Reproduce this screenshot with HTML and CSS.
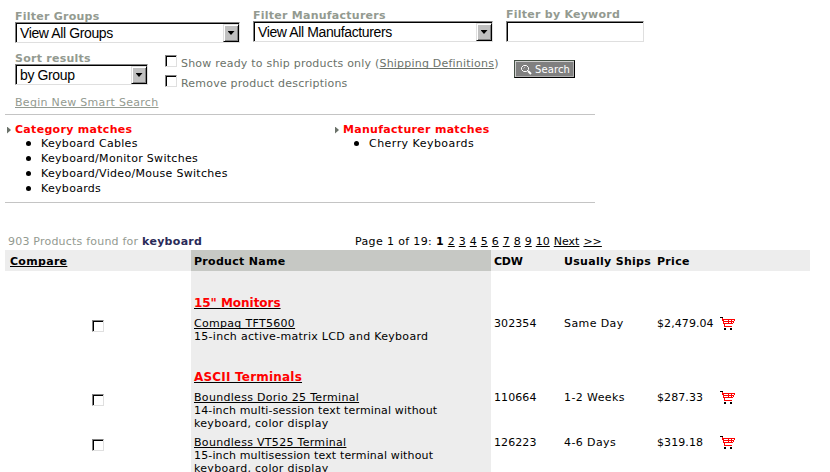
FILE: index.html
```
<!DOCTYPE html>
<html lang="en">
<head>
<meta charset="utf-8">
<title>Smart Search</title>
<link rel="stylesheet" href="styles.css">
</head>
<body>
<svg class="defs" width="0" height="0">
  <symbol id="cart" viewBox="0 0 15 13" shape-rendering="crispEdges">
    <path fill="#000" d="M0 0h3v1H0zM4 11h2v2H4zM10 11h2v2h-2z"/>
    <path fill="#f00" d="M2 1h1v1h12v1H4v1h10v1H4v1h9v1H5v2h7v1H4V7H3V4H2zM8 2h1v5H8zM11 2h1v5h-1zM14 3h1v1h-1zM13 5h1v1h-1z"/>
  </symbol>
</svg>
<div class="page">
  <form class="filters">
    <div class="row top">
      <div class="field groups"><label class="lbl">Filter Groups</label>
        <div class="select"><span>View All Groups</span><i class="drop"></i></div></div>
      <div class="field makers"><label class="lbl">Filter Manufacturers</label>
        <div class="select"><span>View All Manufacturers</span><i class="drop"></i></div></div>
      <div class="field keyword"><label class="lbl">Filter by Keyword</label>
        <div class="select"></div></div>
    </div>
    <div class="row second">
      <div class="field sort"><label class="lbl">Sort results</label>
        <div class="select"><span>by Group</span><i class="drop"></i></div></div>
      <div class="options">
        <div class="option"><i class="check"></i><span>Show ready to ship products only (<a>Shipping Definitions</a>)</span></div>
        <div class="option"><i class="check"></i><span>Remove product descriptions</span></div>
      </div>
      <div class="search">
        <svg width="11" height="10" viewBox="0 0 11 10"><g fill="none" stroke="#fff"><path d="M2.5.5h3l2 2v2l-2 2h-3l-2-2v-2z"/><path stroke-width="2" d="M7 6l3 3"/><path stroke="#ddd" stroke-width=".7" d="M2.500 3.500l1.500-1.500"/></g></svg>
        <span>Search</span></div>
    </div>
    <a class="begin">Begin New Smart Search</a>
  </form>
  <div class="matches">
    <section class="category">
      <h2><i class="arrow"></i><span>Category matches</span></h2>
      <ul><li>Keyboard Cables</li><li>Keyboard/Monitor Switches</li><li>Keyboard/Video/Mouse Switches</li><li>Keyboards</li></ul>
    </section>
    <section class="maker">
      <h2><i class="arrow"></i><span>Manufacturer matches</span></h2>
      <ul><li>Cherry Keyboards</li></ul>
    </section>
  </div>
  <div class="summary">
    <div class="found"><span>903 Products found for</span> <b>keyboard</b></div>
    <div class="pager"><span>Page 1 of 19:</span><b>1</b><a>2</a><a>3</a><a>4</a><a>5</a><a>6</a><a>7</a><a>8</a><a>9</a><a>10</a><a>Next</a><a>&gt;&gt;</a></div>
  </div>
  <div class="grid head">
    <div class="compare"><a>Compare</a></div><div class="name">Product Name</div><div class="cdw">CDW</div><div>Usually Ships</div><div>Price</div><div></div>
  </div>
  <div class="grid group first"><div></div><div class="name"><a>15" Monitors</a></div></div>
  <div class="grid item single">
    <div class="pick"><i class="check"></i></div>
    <div class="name"><a>Compaq TFT5600</a><p>15-inch active-matrix LCD and Keyboard</p></div>
    <div class="num">302354</div><div class="ships">Same Day</div><div class="num">$2,479.04</div><div class="buy"><svg width="15" height="13"><use href="#cart"/></svg></div>
  </div>
  <div class="grid group"><div></div><div class="name"><a>ASCII Terminals</a></div></div>
  <div class="grid item">
    <div class="pick"><i class="check"></i></div>
    <div class="name"><a>Boundless Dorio 25 Terminal</a><p><span class="tight">14-inch multi-session text terminal without</span><br>keyboard, color display</p></div>
    <div class="num">110664</div><div class="ships">1-2 Weeks</div><div class="num">$287.33</div><div class="buy"><svg width="15" height="13"><use href="#cart"/></svg></div>
  </div>
  <div class="grid item">
    <div class="pick"><i class="check"></i></div>
    <div class="name"><a>Boundless VT525 Terminal</a><p><span class="tight">15-inch multisession text terminal without</span><br>keyboard, color display</p></div>
    <div class="num">126223</div><div class="ships">4-6 Days</div><div class="num">$319.18</div><div class="buy"><svg width="15" height="13"><use href="#cart"/></svg></div>
  </div>
</div>
</body>
</html>
```
FILE: styles.css
```
* { box-sizing: border-box; }
html, body { margin: 0; overflow: hidden; }
body { background: #fff; color: #000; font: 11px/13px "DejaVu Sans", sans-serif; letter-spacing: .3px; }
.defs { display: block; }
.page { width: 830px; height: 472px; overflow: hidden; white-space: nowrap; padding-left: 5px; }
a { text-decoration: underline; text-decoration-thickness: 1px; text-underline-offset: 1px; text-decoration-skip-ink: none; }
i { display: block; }

.filters { width: 590px; height: 115px; padding-left: 10px; border-bottom: 1px solid #c4c4c4; }
.row { display: flex; }
.top { height: 52px; padding-top: 8px; }
.field { display: flex; flex: none; flex-direction: column; }
.groups { width: 225px; margin: 2px 13px 0 0; }
.makers { width: 240px; margin: 1px 13px 0 0; }
.keyword { width: 138px; }
.groups .lbl, .makers .lbl, .sort .lbl { height: 12px; }
.lbl { display: block; height: 13px; font-weight: bold; color: #939a90; letter-spacing: .25px; }
.select { display: flex; justify-content: space-between; height: 21px; padding-left: 4px; font: 14px/18px "Liberation Sans", sans-serif; letter-spacing: -.38px; background: #fff; border: 1px solid; border-color: #808080 #dfdfdf #dfdfdf #808080; box-shadow: inset 1px 1px #000; }
.select span { padding-top: 1px; }
.drop { width: 16px; height: 18px; margin-top: 1px; background: #c0c0c0; border: 1px solid; border-color: #dfdfdf #000 #000 #dfdfdf; box-shadow: inset 1px 1px #fff, inset -1px -1px #808080; display: flex; align-items: center; justify-content: center; }
.drop::after { content: ""; width: 7px; height: 4px; background: #000; clip-path: polygon(0 0, 100% 0, 50% 100%); }
.second { height: 44px; }
.sort { width: 133px; margin-right: 17px; }
.options { width: 349px; padding-top: 3px; color: #6b726a; letter-spacing: .21px; }
.option { display: flex; height: 20px; }
.option span { padding: 2px 0 0 4px; }
.check { width: 12px; height: 12px; background: #fff; border: 1px solid; border-color: #808080 #dfdfdf #dfdfdf #808080; box-shadow: inset 1px 1px #000; }
.search { display: flex; flex: none; width: 61px; height: 18px; margin-top: 8px; padding: 3px 0 0 6px; background: #808080; color: #fff; font-size: 10px; line-height: 12px; letter-spacing: .1px; border: 1px solid; border-color: #445044 #000 #000 #445044; box-shadow: inset 1px 1px #d0d0d0, inset -1px -1px #b0b0b0; }
.search svg { display: block; flex: none; margin: 1px 3px 0 0; }
.begin { color: #939a90; }

.matches { display: flex; width: 590px; height: 88px; padding-top: 8px; border-bottom: 1px solid #c4c4c4; }
.category { width: 328px; }
h2 { display: flex; align-items: center; height: 13px; margin: 0; padding-left: 2px; font: bold 11px/13px "DejaVu Sans", sans-serif; color: #f00; }
.arrow { width: 4px; height: 7px; margin: 1px 4px 0 0; background: #6b726a; clip-path: polygon(0 0, 100% 50%, 0 100%); }
ul { margin: 0; padding: 0; list-style: none; line-height: 15px; }
li { display: flex; align-items: center; height: 15px; padding-left: 21px; }
li::before { content: ""; width: 5px; height: 5px; margin-right: 10px; border-radius: 50%; background: #000; }
.maker li { letter-spacing: .47px; }

.summary { display: flex; height: 47px; padding: 32px 0 0 3px; }
.found { width: 347px; color: #939a90; }
.found span { letter-spacing: .21px; }
.found b { color: #2a2a58; }
.pager { display: flex; gap: 4px; }
.pager a, .pager b { letter-spacing: 0; }
.pager span { letter-spacing: .36px; }

.grid { display: grid; grid-template-columns: 186px 300px 70px 93px 63px 93px; width: 805px; }
.grid > div { padding-left: 3px; }
.head { height: 21px; background: #ededed; font-weight: bold; }
.head > div { padding-top: 5px; }
.head .compare { padding-left: 5px; }
.head .cdw { letter-spacing: -.2px; }
.grid .name { background: #ededed; }
.head .name { background: #c6c8c4; }
.group { height: 35px; font-weight: bold; font-size: 12px; line-height: 14px; letter-spacing: .2px; }
.group .name { padding-top: 14px; color: #f00; }
.group a { text-decoration-color: #000; }
.group.first { height: 46px; letter-spacing: -.04px; }
.group.first .name { padding-top: 25px; }
.item { height: 45px; }
.item.single { height: 39px; }
.item p { margin: 0; }
.item .tight { letter-spacing: .15px; }
.item .num { letter-spacing: .08px; }
.item .ships { letter-spacing: .4px; }
.item .pick { padding: 3px 0 0 87px; }
.buy svg { display: block; }
```
